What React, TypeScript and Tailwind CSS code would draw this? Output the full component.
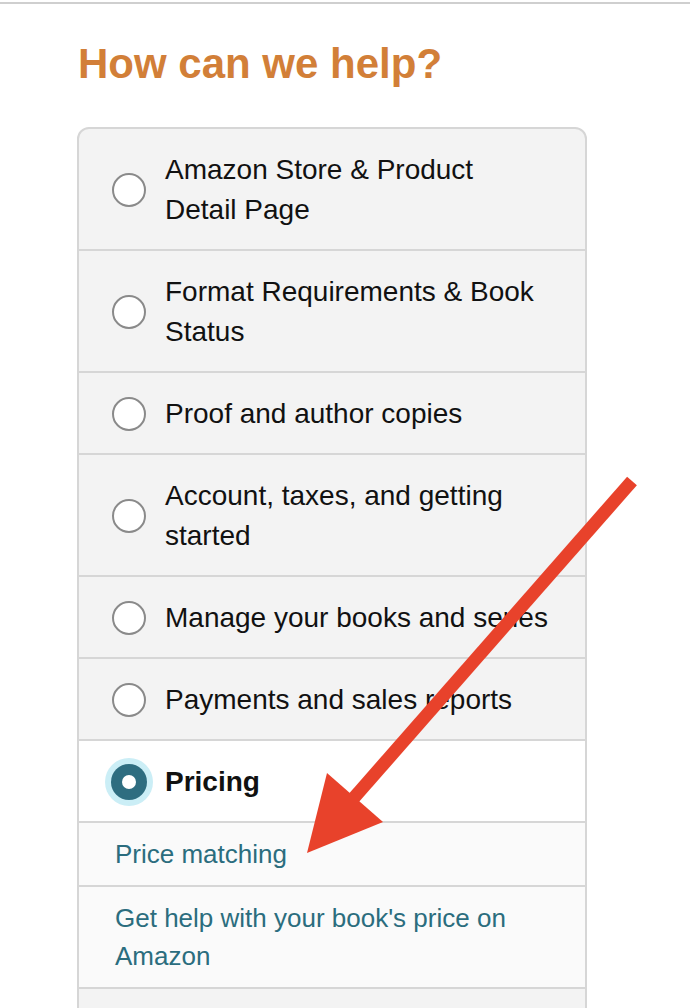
import React from "react";

const items: { label: string[] }[] = [
  { label: ["Amazon Store & Product", "Detail Page"] },
  { label: ["Format Requirements & Book", "Status"] },
  { label: ["Proof and author copies"] },
  { label: ["Account, taxes, and getting", "started"] },
  { label: ["Manage your books and series"] },
  { label: ["Payments and sales reports"] },
];

function Radio() {
  return (
    <div className="w-[46px] h-[40px] flex items-center justify-center shrink-0">
      <div className="w-[34px] h-[34px] rounded-full border-2 border-[#8a8a8a] bg-white shrink-0" />
    </div>
  );
}

function RadioSelected() {
  return (
    <div className="w-[46px] h-[40px] flex items-center justify-center shrink-0">
      <div className="w-[48px] h-[48px] rounded-full bg-[#cbeef6] flex items-center justify-center shrink-0">
        <div className="w-[36px] h-[36px] rounded-full bg-[#2e6d80] flex items-center justify-center">
          <div className="w-[14px] h-[14px] rounded-full bg-white" />
        </div>
      </div>
    </div>
  );
}

export default function App() {
  return (
    <div
      className="relative w-[690px] h-[1008px] overflow-hidden bg-white"
      style={{ fontFamily: '"Liberation Sans", Arial, sans-serif' }}
    >
      <div className="mt-[2px] h-[2px] bg-[#cfcfcf]" />
      <h1 className="ml-[78px] mt-[39px] text-[42px] leading-[42px] font-bold text-[#d27f38]">
        How can we help?
      </h1>
      <div className="ml-[77px] mt-[42px] w-[510px] rounded-t-[12px] border-2 border-[#d6d6d6] bg-[#f3f3f3] text-[#111] text-[28px] leading-[40px]">
        {items.map((it, i) => (
          <div
            key={i}
            className={`flex items-center pt-[21px] pb-[19px] pl-[27px] pr-4 gap-[13px] ${i > 0 ? "border-t-2 border-[#d6d6d6]" : ""}`}
          >
            <Radio />
            <div>
              {it.label.map((l, j) => (
                <div key={j} className="whitespace-nowrap">{l}</div>
              ))}
            </div>
          </div>
        ))}
        <div className="flex items-center pt-[21px] pb-[19px] pl-[27px] pr-4 gap-[13px] border-t-2 border-[#d6d6d6] bg-white">
          <RadioSelected />
          <div className="font-bold">Pricing</div>
        </div>
        <div className="border-t-2 border-[#d6d6d6] bg-[#fafafa] pl-[36px] py-[12px] text-[26px] leading-[38px] text-[#2b6d7e]">
          Price matching
        </div>
        <div className="border-t-2 border-[#d6d6d6] bg-[#fafafa] pl-[36px] py-[12px] text-[26px] leading-[38px] text-[#2b6d7e]">
          <div>Get help with your book's price on</div>
          <div>Amazon</div>
        </div>
        <div className="border-t-2 border-[#d6d6d6] h-[80px]" />
      </div>
      <svg
        className="absolute left-0 top-0"
        width="690"
        height="1008"
        viewBox="0 0 690 1008"
      >
        <line x1="632" y1="481" x2="352" y2="800" stroke="#e8422b" strokeWidth="13" />
        <polygon points="307,853 327,773 383,822" fill="#e8422b" />
      </svg>
    </div>
  );
}
